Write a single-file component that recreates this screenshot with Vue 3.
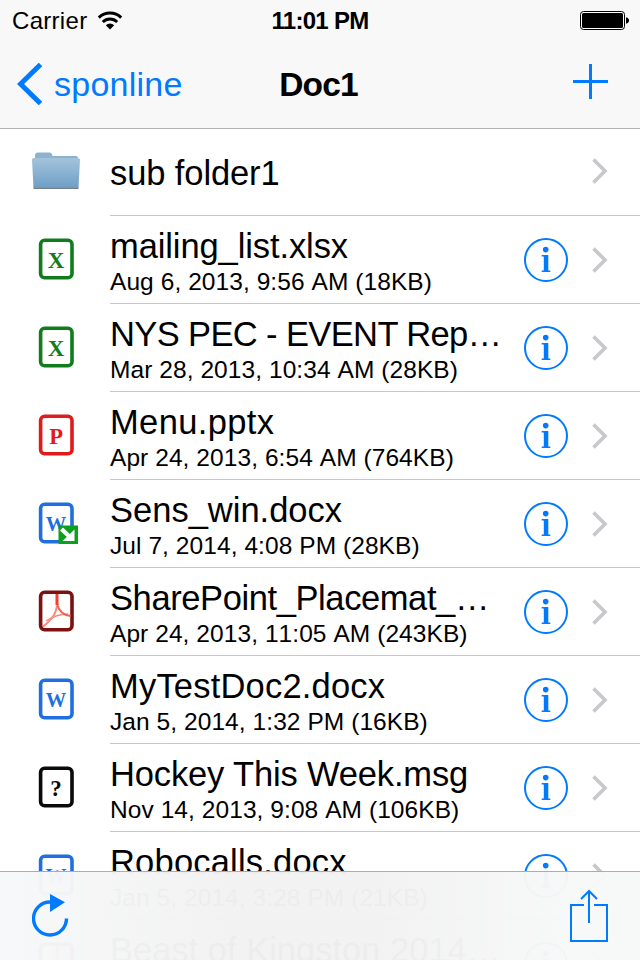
<script setup>
import { ref } from "vue";

const folder = ref("Doc1");
const parent = ref("sponline");

// Badge colors and letters by file kind
const kinds = {
  excel: { color: "#107c1c", letter: "X", size: 23, baseline: 31 },
  powerpoint: { color: "#e01b1b", letter: "P", size: 22.5, baseline: 30.5 },
  word: { color: "#1f6fdc", letter: "W", size: 20.5, baseline: 29.5 },
  pdf: { color: "#7d1010", letter: "", size: 22, baseline: 30 },
  unknown: { color: "#0a0a0a", letter: "?", size: 23, baseline: 31 },
};

// tracking: letter spacing of the name, px
const items = ref([
  { id: 1, kind: "folder", name: "sub folder1", tracking: -0.1 },
  { id: 2, kind: "excel", name: "mailing_list.xlsx", meta: "Aug 6, 2013, 9:56 AM (18KB)", tracking: -0.1 },
  { id: 3, kind: "excel", name: "NYS PEC - EVENT Rep…", meta: "Mar 28, 2013, 10:34 AM (28KB)", tracking: -0.62 },
  { id: 4, kind: "powerpoint", name: "Menu.pptx", meta: "Apr 24, 2013, 6:54 AM (764KB)", tracking: 0.35 },
  { id: 5, kind: "word", name: "Sens_win.docx", meta: "Jul 7, 2014, 4:08 PM (28KB)", synced: true, tracking: 0 },
  { id: 6, kind: "pdf", name: "SharePoint_Placemat_…", meta: "Apr 24, 2013, 11:05 AM (243KB)", tracking: -0.4 },
  { id: 7, kind: "word", name: "MyTestDoc2.docx", meta: "Jan 5, 2014, 1:32 PM (16KB)", tracking: 0.2 },
  { id: 8, kind: "unknown", name: "Hockey This Week.msg", meta: "Nov 14, 2013, 9:08 AM (106KB)", tracking: -0.15 },
  { id: 9, kind: "word", name: "Robocalls.docx", meta: "Jan 5, 2014, 3:28 PM (21KB)", tracking: 0.2 },
  { id: 10, kind: "pdf", name: "Beast of Kingston 2014…", meta: "", tracking: 0 },
]);
</script>

<template>
  <div class="screen">
    <header class="header">
      <div class="status-bar">
        <div class="carrier">
          <span>Carrier</span>
          <svg class="wifi" width="26" height="20" viewBox="0 0 26 20">
            <path d="M1.8 6.6A16 16 0 0 1 24.2 6.6" fill="none" stroke="#000" stroke-width="2.9" />
            <path d="M5.8 11A10.2 10.2 0 0 1 20.2 11" fill="none" stroke="#000" stroke-width="2.8" />
            <path d="M8.8 14.2A6 6 0 0 1 17.2 14.2L13 18.6Z" fill="#000" />
          </svg>
        </div>
        <div class="clock">11:01 PM</div>
        <svg class="battery" width="50" height="20" viewBox="0 0 50 20">
          <rect x="0.5" y="1.5" width="44" height="18" rx="3" fill="#fff" stroke="#000" />
          <rect x="2" y="3" width="41" height="15" rx="1.5" fill="#000" />
          <path d="M46 7.3Q49 8 49 10.5Q49 13 46 13.7Z" fill="#000" />
        </svg>
      </div>
      <nav class="nav-bar">
        <div class="back">
          <svg width="26" height="42" viewBox="0 0 26 42">
            <path d="M23.5 1.5L3.5 21L23.5 40.5" fill="none" stroke="#007aff" stroke-width="5" />
          </svg>
          <span>{{ parent }}</span>
        </div>
        <h1 class="title">{{ folder }}</h1>
        <svg class="add" width="35" height="35" viewBox="0 0 35 35">
          <path d="M16 0h3v16h16v3H19v16h-3V19H0v-3h16z" fill="#007aff" />
        </svg>
      </nav>
    </header>

    <ul class="list">
      <li v-for="item in items" :key="item.id" class="row" :class="{ folder: item.kind === 'folder' }">
        <div class="icon">
          <svg v-if="item.kind === 'folder'" width="50" height="40" viewBox="0 0 50 40">
            <defs>
              <linearGradient id="folder-front" x1="0" y1="0" x2="0" y2="1">
                <stop offset="0" stop-color="#a3c3dc" />
                <stop offset="1" stop-color="#6f9fc6" />
              </linearGradient>
            </defs>
            <path d="M4 10V4.5Q4 1.5 7 1.5H18Q21 1.5 21.5 5H45Q47 5 47 8V12H4Z" fill="#8db2cd" />
            <path d="M1 8.5Q1 7 3 7H46.5Q49 7 49 8.5L47.5 37H2.5Z" fill="url(#folder-front)" />
            <path d="M2.5 37.3H47.5" stroke="#76818b" stroke-width="1.2" />
          </svg>
          <svg v-else width="50" height="44" viewBox="0 0 50 44">
            <rect x="9.6" y="3.3" width="31.4" height="37.4" rx="4" fill="#fff" :stroke="kinds[item.kind].color" stroke-width="3.6" />
            <text class="letter" x="25" :y="kinds[item.kind].baseline" text-anchor="middle" :font-size="kinds[item.kind].size" :fill="kinds[item.kind].color">{{ kinds[item.kind].letter }}</text>
            <g v-if="item.kind === 'pdf'" fill="none" stroke="#f98a7e">
              <path d="M26 17C25 23 23 27 20 30C17 33 15 36 12 37.5" stroke-width="2" />
              <path d="M15 32C21 28 27 25 37 25" stroke-width="1.5" />
              <path d="M26 15C27.5 21 32 26 39.5 27" stroke="#f4604f" stroke-width="2" />
              <path d="M26 5V16" stroke="#f2402c" stroke-width="3" />
            </g>
            <g v-if="item.synced">
              <rect x="27.5" y="24.5" width="19.5" height="18.5" fill="#0ba01d" />
              <path d="M30.5 28L40 37" stroke="#fff" stroke-width="4.4" />
              <path d="M43.5 28.5V40H31.5Z" fill="#fff" />
            </g>
          </svg>
        </div>
        <div class="body">
          <div class="text">
            <div class="name" :style="{ letterSpacing: item.tracking + 'px' }">{{ item.name }}</div>
            <div v-if="item.kind !== 'folder'" class="meta">{{ item.meta }}</div>
          </div>
          <svg v-if="item.kind !== 'folder'" class="info" width="44" height="44" viewBox="0 0 44 44">
            <circle cx="22" cy="22" r="21" fill="none" stroke="#007aff" stroke-width="2" />
            <circle cx="21.7" cy="11.6" r="2.8" fill="#007aff" />
            <path d="M17.7 17h6.6v15.6H26.3V34H17.7v-1.4h2.1V18.4H17.7z" fill="#007aff" />
          </svg>
          <svg class="chevron" width="16" height="26" viewBox="0 0 16 26">
            <path d="M1.5 1.5L13 13L1.5 24.5" fill="none" stroke="#c7c7cc" stroke-width="3.6" />
          </svg>
        </div>
      </li>
    </ul>

    <footer class="toolbar">
      <svg width="38" height="44" viewBox="0 0 38 44">
        <path d="M34.5 24.5A16.5 16.5 0 1 1 18 8" fill="none" stroke="#007aff" stroke-width="3.4" />
        <path d="M18 0L33 8.3L18 18Z" fill="#007aff" />
      </svg>
      <svg width="38" height="54" viewBox="0 0 38 54">
        <path d="M14 16H1V52H37V16H24" fill="none" stroke="#007aff" stroke-width="2" />
        <path d="M19 34V2M11 10L19 2L27 10" fill="none" stroke="#007aff" stroke-width="2" />
      </svg>
    </footer>
  </div>
</template>

<style>
body {
  margin: 0;
  background: #fff;
}
</style>

<style scoped>
.screen {
  position: relative;
  width: 640px;
  height: 960px;
  overflow: hidden;
  background: #fff;
  color: #000;
  font-family: "Liberation Sans", Arial, sans-serif;
}

/* Header */
.header {
  box-sizing: border-box;
  height: 129px;
  background: #f8f8f8;
  border-bottom: 1px solid #b2b2b2;
}

.status-bar {
  box-sizing: border-box;
  display: grid;
  grid-template-columns: 1fr auto 1fr;
  align-items: center;
  height: 40px;
  padding: 2px 10px 0;
  font-size: 24px;
}

.carrier {
  display: flex;
  align-items: center;
  gap: 10px;
  padding-left: 2px;
  letter-spacing: 0.3px;
}

.clock {
  font-weight: bold;
  letter-spacing: -0.7px;
}

.battery {
  justify-self: end;
  margin-bottom: 2px;
}

.nav-bar {
  display: grid;
  grid-template-columns: 1fr auto 1fr;
  align-items: center;
  height: 88px;
  padding: 0 20px 0 17px;
}

.back {
  display: flex;
  align-items: center;
  gap: 11px;
  color: #007aff;
  font-size: 34px;
  letter-spacing: 0.25px;
}

.title {
  margin: 0;
  padding-top: 2px;
  font-size: 33.5px;
  font-weight: bold;
  letter-spacing: -0.9px;
}

.add {
  justify-self: end;
  margin: 0 12px 5px 0;
}

/* File list */
.list {
  margin: 0;
  padding: 0;
  list-style: none;
}

.row {
  display: flex;
  height: 88px;
}

.row.folder {
  height: 87px;
}

.icon {
  display: flex;
  align-items: center;
  width: 50px;
  padding: 0 29px 2px 31px;
}

.folder .icon {
  padding-bottom: 4px;
}

.letter {
  font-family: "Liberation Serif", serif;
  font-weight: bold;
}

.body {
  box-sizing: border-box;
  display: flex;
  flex: 1;
  align-items: center;
  padding-right: 32px;
  border-bottom: 1px solid #c8c7cc;
}

.text {
  flex: 1;
  padding-top: 4px;
  white-space: nowrap;
}

.folder .text {
  padding-top: 1px;
}

.name {
  font-size: 34.5px;
  line-height: 40px;
}

.meta {
  min-height: 31px;
  font-size: 24.5px;
  font-kerning: none;
  line-height: 31px;
  letter-spacing: 0.07px;
}

.info {
  margin-right: 24px;
}

.folder .chevron {
  margin-bottom: 2px;
}

/* Bottom toolbar */
.toolbar {
  box-sizing: border-box;
  position: absolute;
  left: 0;
  right: 0;
  bottom: 0;
  display: flex;
  align-items: center;
  justify-content: space-between;
  height: 89px;
  padding: 0 32px;
  border-top: 1px solid #adadad;
  background: linear-gradient(90deg, rgba(247, 248, 249, 0.975), rgba(242, 242, 242, 0.975) 35%, rgba(242, 242, 242, 0.975) 60%, rgba(247, 248, 248, 0.975) 90%);
}
</style>
